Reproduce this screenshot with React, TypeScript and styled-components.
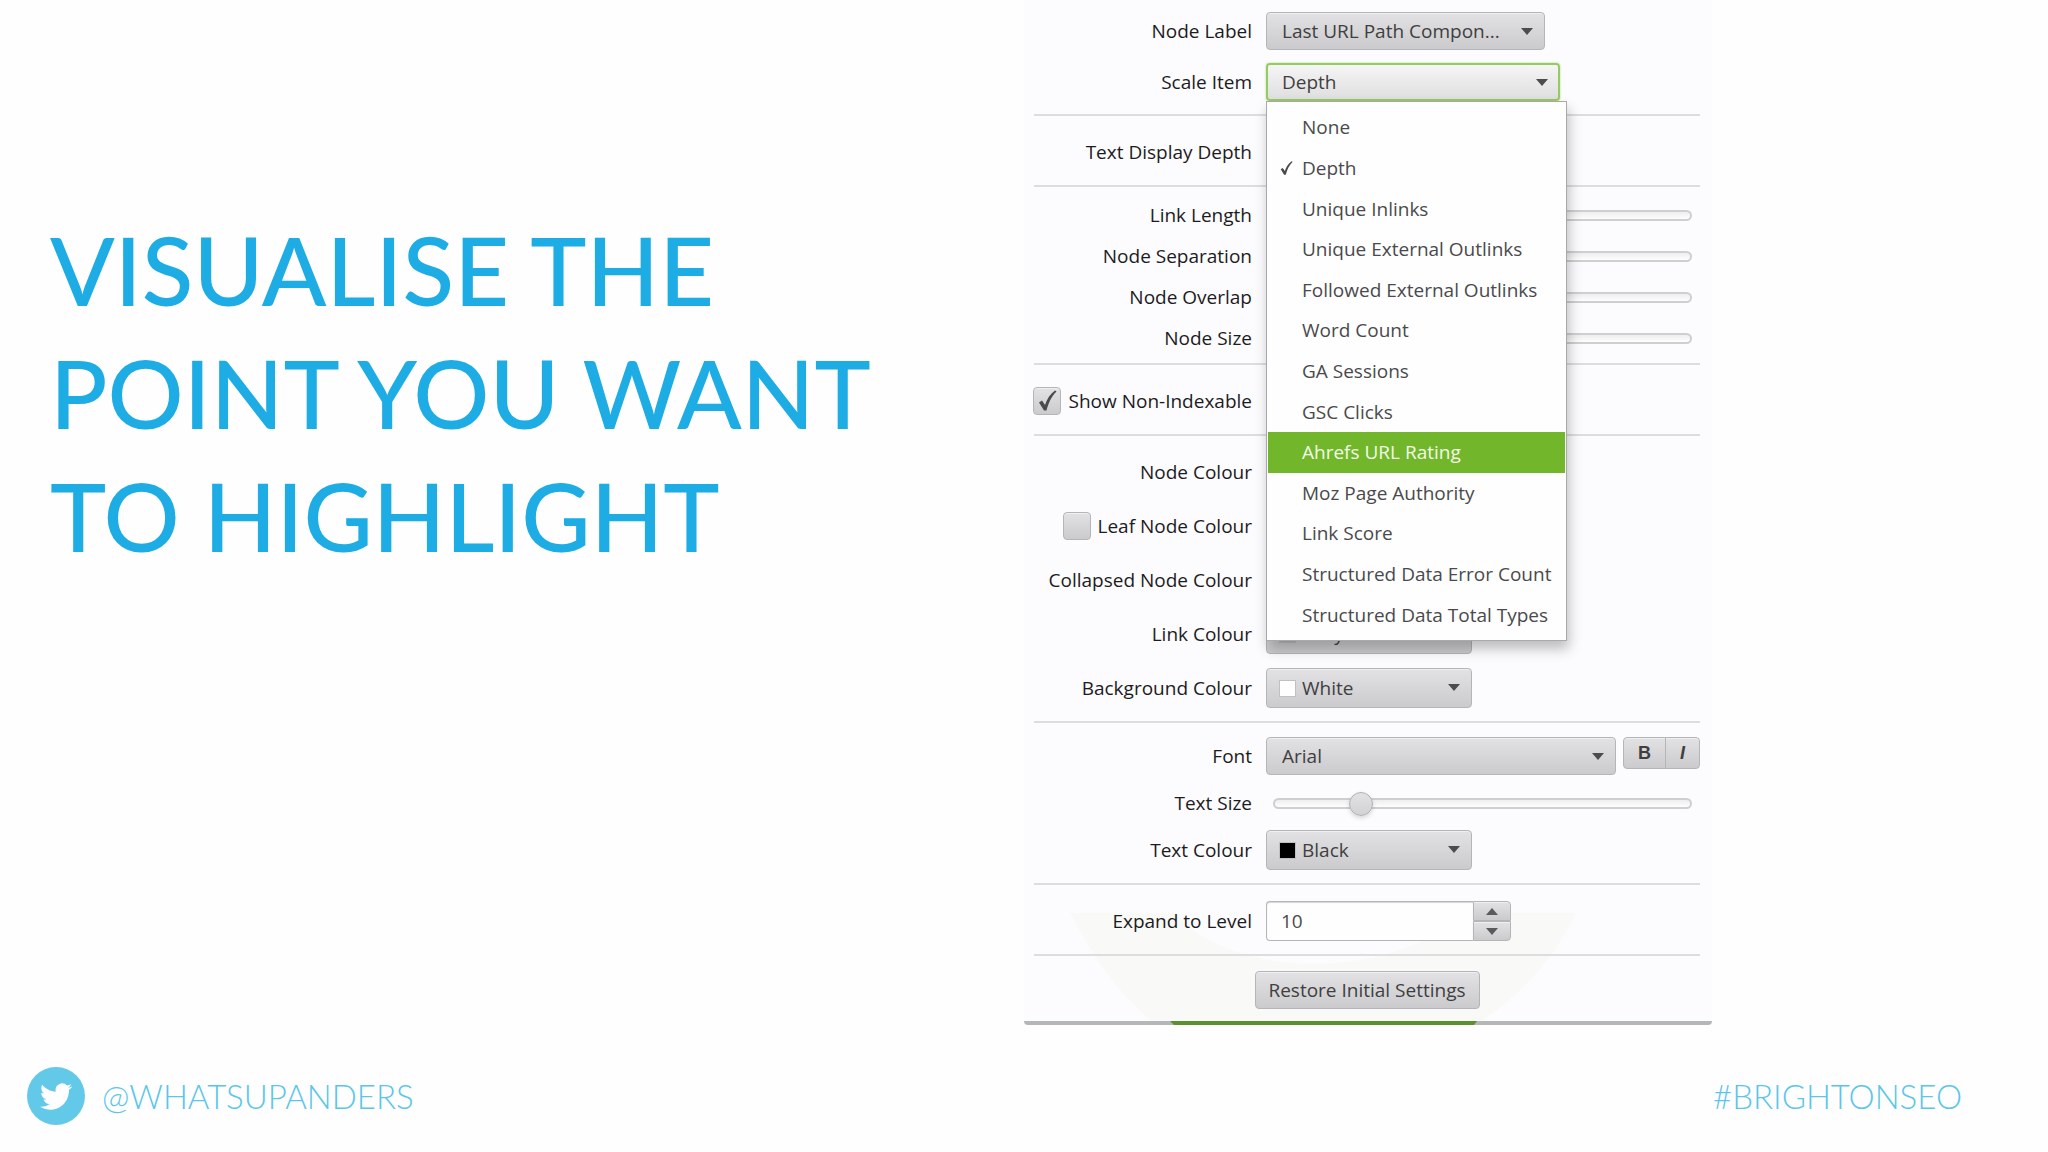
import React from "react";
import styled, { createGlobalStyle, css } from "styled-components";

const GlobalStyle = createGlobalStyle`
  *, *::before, *::after { box-sizing: border-box; }
  body {
    margin: 0;
    background: #fefefe;
    font-family: "Open Sans", "Noto Sans", sans-serif;
  }
`;

const Slide = styled.div`
  min-height: 100vh;
  display: flex;
  flex-direction: column;
`;

const Main = styled.main`
  flex: 1;
  display: grid;
  grid-template-columns: 1fr 1fr;
  align-items: start;
`;

const Title = styled.h1`
  margin: 0;
  padding: 208px 80px 0 50px;
  font-family: Lato, "Open Sans", sans-serif;
  font-size: 95px;
  line-height: 123px;
  font-weight: 500;
  color: #1dace4;
`;

const Panel = styled.form`
  position: relative;
  max-width: 688px;
  padding: 0 12px 0 10px;
  background: #fcfbfd;
  border-bottom: 4px solid #b4b6b8;
  border-radius: 0 0 4px 4px;
`;

const Watermark = styled.svg`
  position: absolute;
  right: 0;
  bottom: -4px;
  width: 100%;
  height: 112px;
`;

const Section = styled.div<{ $top?: number; $bottom?: number; $gap?: number }>`
  position: relative;
  display: grid;
  grid-auto-rows: 40px;
  row-gap: ${(p) => p.$gap ?? 14}px;
  padding: ${(p) => p.$top ?? 16}px 0 ${(p) => p.$bottom ?? 13}px;

  & + & {
    border-top: 2px solid #dddcde;
  }
`;

const Row = styled.div`
  display: grid;
  grid-template-columns: 218px 1fr;
  column-gap: 14px;
  align-items: center;
`;

const Label = styled.label`
  display: flex;
  align-items: center;
  justify-content: flex-end;
  gap: 7px;
  font-size: 19px;
  line-height: 28px;
  color: #1c1c1e;
  white-space: nowrap;
`;

const Field = styled.div`
  position: relative;
  display: flex;
  align-items: center;
  gap: 7px;
`;

const raised = css`
  border: 1px solid #b5b4b6;
  border-radius: 4px;
  background: linear-gradient(#e2e1e3, #cbcacc);
  box-shadow: inset 0 1px 0 #efeef0;
  color: #3f3f41;
  font-family: inherit;
`;

const SelectBox = styled.div<{ $width?: number; $tall?: boolean }>`
  position: relative;
  width: ${(p) => (p.$width ? `${p.$width}px` : "auto")};
  flex: ${(p) => (p.$width ? "none" : "1")};
  height: ${(p) => (p.$tall ? 40 : 38)}px;

  &::after {
    content: "";
    position: absolute;
    right: 12px;
    top: 16px;
    border: 6px solid transparent;
    border-top: 7px solid #4c4b4d;
    border-bottom: 0;
    pointer-events: none;
  }
`;

const Select = styled.select<{ $swatch?: boolean }>`
  ${raised}
  appearance: none;
  width: 100%;
  height: 100%;
  padding: 0 30px 0 ${(p) => (p.$swatch ? 35 : 15)}px;
  font-size: 19px;
`;

const Swatch = styled.span<{ $color: string }>`
  position: absolute;
  left: 13px;
  top: 12px;
  width: 17px;
  height: 17px;
  border: 1px solid #c0bfc1;
  background: ${(p) => p.$color};
`;

const OpenSelect = styled.button`
  ${raised}
  width: 100%;
  height: 100%;
  padding: 0 14px;
  border: 2px solid #94cb62;
  background: linear-gradient(#f6f5f6, #e0dfe0);
  box-shadow: 0 0 2px #a4d477;
  font-size: 19px;
  text-align: left;
`;

const Options = styled.ul`
  position: absolute;
  z-index: 2;
  top: 38px;
  left: 0;
  width: 301px;
  height: 540px;
  margin: 0;
  padding: 5px 1px;
  display: grid;
  grid-auto-rows: 1fr;
  list-style: none;
  border: 1px solid #a9a8aa;
  background: #fefefe;
  box-shadow: 2px 8px 12px rgba(0, 0, 0, 0.25);
`;

const Option = styled.li<{ $active?: boolean }>`
  display: grid;
  grid-template-columns: 22px 1fr;
  align-items: center;
  padding-left: 12px;
  font-size: 19px;
  line-height: 28px;
  white-space: nowrap;
  color: ${(p) => (p.$active ? "#f2fbe6" : "#4a4a4c")};
  background: ${(p) => (p.$active ? "#71b62b" : "transparent")};

  span {
    grid-column: 2;
  }
  svg {
    grid-row: 1;
    width: 13px;
    height: 16px;
  }
`;

const Range = styled.input`
  appearance: none;
  width: 100%;
  height: 26px;
  margin: 0 8px 0 7px;
  background: transparent;

  &::-webkit-slider-runnable-track {
    height: 11px;
    border: 2px solid #cfced0;
    border-radius: 6px;
    background: linear-gradient(#eeedef, #fefefe);
  }
  &::-webkit-slider-thumb {
    appearance: none;
    width: 24px;
    height: 24px;
    margin-top: -8px;
    border: 1px solid #b0afb1;
    border-radius: 50%;
    background: linear-gradient(#e2e1e3, #d2d1d3);
    box-shadow: 0 2px 4px rgba(0, 0, 0, 0.15);
  }
`;

const CheckWrap = styled.span`
  position: relative;
  display: flex;

  svg {
    position: absolute;
    left: 5px;
    top: 3px;
    width: 19px;
    height: 21px;
    pointer-events: none;
  }
`;

const Checkbox = styled.input`
  ${raised}
  appearance: none;
  width: 28px;
  height: 28px;
  margin: 0;
`;

const StyleButtons = styled.div`
  display: flex;
  align-self: flex-start;
`;

const StyleButton = styled.button<{ $italic?: boolean }>`
  ${raised}
  width: ${(p) => (p.$italic ? 35 : 43)}px;
  height: 32px;
  padding: 0;
  font: ${(p) => (p.$italic ? "italic" : "normal")} bold 18px "Liberation Sans", sans-serif;
  border-radius: ${(p) => (p.$italic ? "0 4px 4px 0" : "4px 0 0 4px")};
  margin-left: ${(p) => (p.$italic ? -1 : 0)}px;
`;

const Spinner = styled.div`
  display: grid;
  grid-template-columns: 207px 38px;
  grid-template-rows: 20px 20px;
`;

const SpinInput = styled.input`
  grid-row: span 2;
  width: 100%;
  padding: 0 14px;
  border: 1px solid #b5b4b6;
  border-right: 0;
  border-radius: 4px 0 0 4px;
  background: #fefefe;
  box-shadow: inset 0 1px 1px #d5d4d6;
  font-family: inherit;
  font-size: 19px;
  color: #4a4a4c;
`;

const SpinButton = styled.button<{ $down?: boolean }>`
  ${raised}
  display: grid;
  place-items: center;
  padding: 0;
  border-radius: ${(p) => (p.$down ? "0 0 4px 0" : "0 4px 0 0")};

  &::before {
    content: "";
    border: 6px solid transparent;
    ${(p) =>
      p.$down
        ? "border-top: 7px solid #5a595b; border-bottom: 0;"
        : "border-bottom: 7px solid #5a595b; border-top: 0;"}
  }
`;

const Actions = styled(Section)`
  justify-content: center;
  grid-auto-rows: 38px;
`;

const ResetButton = styled.button`
  ${raised}
  width: 225px;
  padding: 0;
  font-size: 19px;
`;

const Footer = styled.footer`
  display: flex;
  justify-content: space-between;
  align-items: center;
  padding: 0 86px 27px 27px;
  font-family: Lato, "Open Sans", sans-serif;
  font-weight: 300;
  font-size: 33px;
  line-height: 58px;
  color: #5bc6ea;
`;

const Handle = styled.a`
  display: flex;
  align-items: center;
  gap: 17px;
  color: inherit;
  text-decoration: none;

  svg {
    width: 58px;
    height: 58px;
  }
`;

const options = [
  "None",
  "Depth",
  "Unique Inlinks",
  "Unique External Outlinks",
  "Followed External Outlinks",
  "Word Count",
  "GA Sessions",
  "GSC Clicks",
  "Ahrefs URL Rating",
  "Moz Page Authority",
  "Link Score",
  "Structured Data Error Count",
  "Structured Data Total Types",
];

const CheckMark = () => (
  <svg viewBox="0 0 19 21" aria-hidden="true">
    <path d="M1 12.5 L4 10.5 L7 15 C9 9 12 4 17 0.5 L18.5 1.5 C13 7 10.5 13 8.5 20.5 L6 20.5 Z" fill="#4a4a4c" />
  </svg>
);

function SelectRow({ id, label, value, width, swatch, children }: {
  id: string;
  label: string;
  value: string;
  width?: number;
  swatch?: string;
  children?: React.ReactNode;
}) {
  return (
    <Row>
      <Label htmlFor={id}>{label}</Label>
      <Field>
        <SelectBox $width={width} $tall={!!swatch}>
          <Select id={id} $swatch={!!swatch}>
            <option>{value}</option>
          </Select>
          {swatch && <Swatch $color={swatch} />}
        </SelectBox>
        {children}
      </Field>
    </Row>
  );
}

function RangeRow({ id, label, value }: { id: string; label: string; value: number }) {
  return (
    <Row>
      <Label htmlFor={id}>{label}</Label>
      <Field>
        <Range id={id} type="range" defaultValue={value} />
      </Field>
    </Row>
  );
}

function CheckRow({ label, checked }: { label: string; checked?: boolean }) {
  return (
    <Row>
      <Label>
        <CheckWrap>
          <Checkbox type="checkbox" defaultChecked={checked} />
          {checked && <CheckMark />}
        </CheckWrap>
        {label}
      </Label>
    </Row>
  );
}

export default function App() {
  return (
    <Slide>
      <GlobalStyle />
      <Main>
        <Title>
          VISUALISE THE
          <br />
          POINT YOU WANT
          <br />
          TO HIGHLIGHT
        </Title>
        <Panel onSubmit={(e) => e.preventDefault()}>
          <Watermark viewBox="0 0 688 112" preserveAspectRatio="none" aria-hidden="true">
            <path d="M46 0 C75 55 100 85 128 108 H457 C500 80 530 45 552 0 H440 C380 60 220 75 150 0 Z" fill="#f9faf8" />
            <path d="M146 108 H453 L450 112 H150 Z" fill="#5c9130" />
          </Watermark>
          <Section $top={11} $bottom={12} $gap={11}>
            <SelectRow id="node-label" label="Node Label" value="Last URL Path Compon..." width={279} />
            <Row>
              <Label htmlFor="scale-item">Scale Item</Label>
              <Field>
                <SelectBox $width={294}>
                  <OpenSelect id="scale-item" type="button" aria-haspopup="listbox" aria-expanded>
                    Depth
                  </OpenSelect>
                  <Options role="listbox" aria-label="Scale Item">
                    {options.map((name) => (
                      <Option key={name} role="option" aria-selected={name === "Depth"} $active={name === "Ahrefs URL Rating"}>
                        {name === "Depth" && <CheckMark />}
                        <span>{name}</span>
                      </Option>
                    ))}
                  </Options>
                </SelectBox>
              </Field>
            </Row>
          </Section>
          <Section>
            <Row>
              <Label as="span">Text Display Depth</Label>
            </Row>
          </Section>
          <Section $top={8} $bottom={5} $gap={1}>
            <RangeRow id="link-length" label="Link Length" value={30} />
            <RangeRow id="node-separation" label="Node Separation" value={30} />
            <RangeRow id="node-overlap" label="Node Overlap" value={30} />
            <RangeRow id="node-size" label="Node Size" value={30} />
          </Section>
          <Section>
            <CheckRow label="Show Non-Indexable" checked />
          </Section>
          <Section>
            <Row>
              <Label as="span">Node Colour</Label>
            </Row>
            <CheckRow label="Leaf Node Colour" />
            <Row>
              <Label as="span">Collapsed Node Colour</Label>
            </Row>
            <SelectRow id="link-colour" label="Link Colour" value="Grey" width={206} swatch="#bdbdbd" />
            <SelectRow id="background-colour" label="Background Colour" value="White" width={206} swatch="#fefefe" />
          </Section>
          <Section $top={13} $gap={7}>
            <SelectRow id="font" label="Font" value="Arial">
              <StyleButtons>
                <StyleButton type="button">B</StyleButton>
                <StyleButton type="button" $italic>
                  I
                </StyleButton>
              </StyleButtons>
            </SelectRow>
            <RangeRow id="text-size" label="Text Size" value={19} />
            <SelectRow id="text-colour" label="Text Colour" value="Black" width={206} swatch="#000000" />
          </Section>
          <Section>
            <Row>
              <Label htmlFor="expand-level">Expand to Level</Label>
              <Spinner>
                <SpinInput id="expand-level" type="text" inputMode="numeric" defaultValue="10" />
                <SpinButton type="button" aria-label="Increase level" />
                <SpinButton type="button" aria-label="Decrease level" $down />
              </Spinner>
            </Row>
          </Section>
          <Actions $top={15} $bottom={12}>
            <ResetButton type="reset">Restore Initial Settings</ResetButton>
          </Actions>
        </Panel>
      </Main>
      <Footer>
        <Handle href="#whatsupanders">
          <svg viewBox="0 0 58 58" aria-hidden="true">
            <circle cx="29" cy="29" r="29" fill="#62c9e8" />
            <path
              transform="translate(13 13.5) scale(1.34)"
              fill="#fefefe"
              d="M23.953 4.57a10 10 0 01-2.825.775 4.958 4.958 0 002.163-2.723c-.951.555-2.005.959-3.127 1.184a4.92 4.92 0 00-8.384 4.482C7.69 8.095 4.067 6.13 1.64 3.162a4.822 4.822 0 00-.666 2.475c0 1.71.87 3.213 2.188 4.096a4.904 4.904 0 01-2.228-.616v.06a4.923 4.923 0 003.946 4.827 4.996 4.996 0 01-2.212.085 4.936 4.936 0 004.604 3.417 9.867 9.867 0 01-6.102 2.105c-.39 0-.779-.023-1.17-.067a13.995 13.995 0 007.557 2.209c9.053 0 13.998-7.496 13.998-13.985 0-.21 0-.42-.015-.63A9.935 9.935 0 0024 4.59z"
            />
          </svg>
          <span>@WHATSUPANDERS</span>
        </Handle>
        <span>#BRIGHTONSEO</span>
      </Footer>
    </Slide>
  );
}
